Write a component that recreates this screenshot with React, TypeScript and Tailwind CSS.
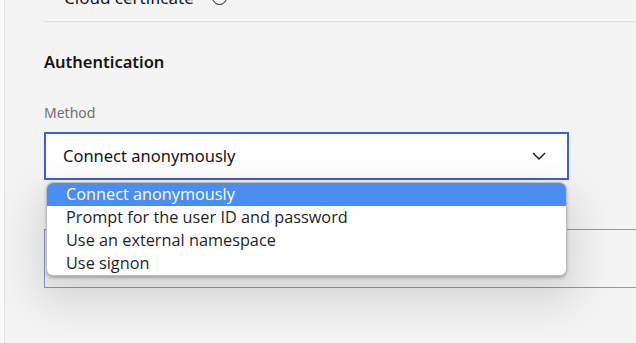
import React from 'react'

const OPTIONS = [
  'Connect anonymously',
  'Prompt for the user ID and password',
  'Use an external namespace',
  'Use signon',
]

export default function App() {
  const selected = 0

  return (
    <div
      className="w-[636px] h-[343px] overflow-hidden bg-[#f4f4f4] flex text-[#161616]"
      style={{ fontFamily: '"Noto Sans", Roboto, sans-serif' }}
    >
      {/* thin left rail */}
      <div className="w-[5px] shrink-0 bg-[#fafafa] border-r border-[#e4e4e4]" />

      <div className="flex-1 flex flex-col pl-[38px]">
        {/* previous section, scrolled out of view */}
        <div className="flex items-center gap-[18px] pl-[21px] h-[21px] -mt-[13px]">
          <span className="text-[17px] leading-[20px]">Cloud certificate</span>
          <span className="w-[15px] h-[15px] rounded-full border-[1.5px] border-[#161616]" />
        </div>
        <div className="h-px bg-[#e0e0e0] mt-[13px]" />

        <h2 className="mt-[28px] text-[16.5px] leading-[24px] font-semibold pl-px">Authentication</h2>

        <label className="mt-[30px] text-[14px] leading-[18px] text-[#6f6f6f] pl-px">Method</label>

        <div className="relative mt-[10px] w-[525px] ml-px">
          <div className="h-[48px] bg-white border-2 border-[#3c5de4] flex items-center justify-between pl-[17px] pr-[21px]">
            <span className="text-[16.5px]">Connect anonymously</span>
            <svg width="14" height="8" viewBox="0 0 14 8" fill="none">
              <path d="M1 1l6 6 6-6" stroke="#161616" strokeWidth="1.4" />
            </svg>
          </div>

          {/* open native list */}
          <ul
            className="absolute z-10 left-[2px] right-[2px] top-[50px] bg-white border border-[#bdbdbd] rounded-[7px] overflow-hidden shadow-[0_2px_3px_rgba(0,0,0,0.25),0_18px_40px_10px_rgba(0,0,0,0.12)]"
            style={{ fontFamily: '"Open Sans", "Noto Sans", sans-serif' }}
          >
            {OPTIONS.map((o, i) => (
              <li
                key={o}
                className={`h-[23px] leading-[23px] pl-[19px] text-[16.3px] ${
                  i === selected ? 'bg-[#4a8ef4] text-white' : 'text-[#1f1f1f]'
                }`}
              >
                {o}
              </li>
            ))}
          </ul>
        </div>

        {/* field hidden behind the list */}
        <div className="mt-[49px] ml-px h-[59px] border border-r-0 border-[#8e92d6]" />
      </div>
    </div>
  )
}
